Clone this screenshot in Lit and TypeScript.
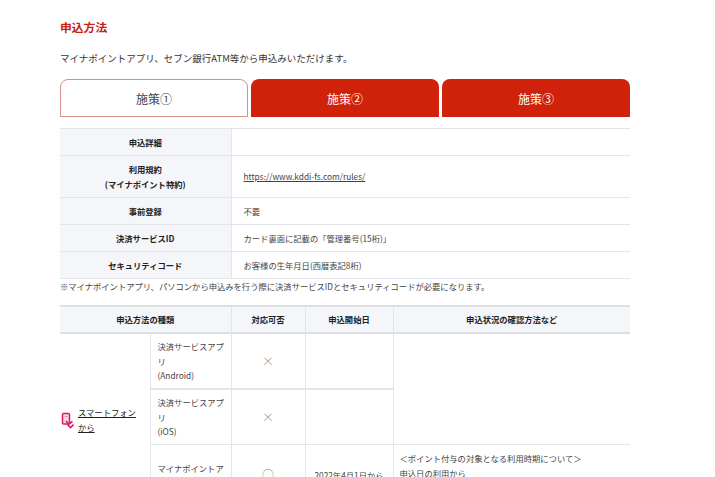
import { LitElement, html, css } from "lit";
import { customElement } from "lit/decorators.js";

@customElement("app-root")
export class AppRoot extends LitElement {
  static styles = css`
    :host {
      display: block;
      height: 477px;
      overflow: hidden;
      background: #fff;
      color: #333;
      font-family: "Noto Sans CJK JP", "Noto Sans", sans-serif;
      font-size: 8.3px;
    }
    .page { width: 570px; padding: 19px 0 0 60px; }
    h2 { margin: 0; font-size: 11.8px; line-height: 15px; font-weight: 700; color: #c9200f; }
    .lead { margin: 17px 0 0; font-size: 9.5px; line-height: 14px; }
    .tabs { display: flex; gap: 3px; margin-top: 14px; }
    .tab {
      flex: 1 1 188px; height: 38px; box-sizing: border-box;
      display: flex; align-items: center; justify-content: center;
      border-radius: 8px 8px 0 0;
      background: #d0210a; color: #fff; font-size: 12px;
    }
    .tab.on { background: #fff; color: #444; border: 1px solid #d9908a; }
    table { border-collapse: collapse; table-layout: fixed; width: 570px; }
    th, td { border: 1px solid #e3e5e8; padding: 0; line-height: 14.5px; }
    tr > :first-child { border-left: 0; }
    tr > :last-child { border-right: 0; }
    th { background: #f4f6f9; font-weight: 700; color: #222; text-align: center; }
    td { padding-left: 12px; color: #444; }
    .t1 { margin-top: 11px; }
    .t1 tr { height: 27px; }
    .t1 tr.tall { height: 42px; }
    .note { margin: 0; height: 26px; line-height: 15px; color: #444; }
    .t2 thead tr { height: 27px; }
    .t2 thead th { border-top: 2px solid #dcdfe4; border-bottom: 2px solid #dcdfe4; }
    .t2 tbody tr { height: 55px; }
    .t2 tbody tr.bold-top { height: 56px; }
    .t2 tbody tr.last { height: 62px; }
    .t2 td { padding: 5px 6px 5px 7px; vertical-align: middle; }
    .t2 td.mark { padding: 0; text-align: center; font-size: 12px; font-weight: 300; color: #888; }
    .t2 td.date { padding: 0; text-align: center; }
    .t2 tr.bold-top td.sub,
    .t2 tr.bold-top td.mark,
    .t2 tr.bold-top td.date { border-top: 2px solid #e3e5e8; }
    .t2 td.more { vertical-align: top; padding: 6px 6px; line-height: 15px; }
    .t2 td.phone-cell { padding: 0 0 0 1px; }
    .phone { display: flex; align-items: center; gap: 4px; color: #222; }
    .phone svg { flex: none; width: 13px; height: 17px; }
    a { color: inherit; text-decoration: underline; }
    .phone a { width: 62px; line-height: 15px; }
  `;

  render() {
    return html`
      <div class="page">
        <h2>申込方法</h2>
        <p class="lead">マイナポイントアプリ、セブン銀行ATM等から申込みいただけます。</p>
        <div class="tabs">
          <div class="tab on">施策①</div>
          <div class="tab">施策②</div>
          <div class="tab">施策③</div>
        </div>
        <table class="t1">
          <colgroup><col style="width:171px" /><col /></colgroup>
          <tr><th>申込詳細</th><td></td></tr>
          <tr class="tall">
            <th>利用規約<br />(マイナポイント特約)</th>
            <td><a href="#">https://www.kddi-fs.com/rules/</a></td>
          </tr>
          <tr><th>事前登録</th><td>不要</td></tr>
          <tr><th>決済サービスID</th><td>カード裏面に記載の「管理番号(15桁)」</td></tr>
          <tr><th>セキュリティコード</th><td>お客様の生年月日(西暦表記8桁)</td></tr>
        </table>
        <p class="note">※マイナポイントアプリ、パソコンから申込みを行う際に決済サービスIDとセキュリティコードが必要になります。</p>
        <table class="t2">
          <colgroup>
            <col style="width:90px" /><col style="width:81px" /><col style="width:74px" />
            <col style="width:88px" /><col />
          </colgroup>
          <thead>
            <tr>
              <th colspan="2">申込方法の種類</th>
              <th>対応可否</th>
              <th>申込開始日</th>
              <th>申込状況の確認方法など</th>
            </tr>
          </thead>
          <tbody>
            <tr>
              <td class="phone-cell" rowspan="3">
                <div class="phone">
                  <svg viewBox="0 0 13 17" fill="none">
                    <rect x="1.5" y="1.5" width="7" height="10.5" rx="1" fill="#f9d5e2" stroke="#dc1c62" stroke-width="1.5" />
                    <path d="M3.5 4.5h3" stroke="#e88aab" stroke-width="1" />
                    <path d="M5 9l3 3 3.5-2.5M6.5 12.5l3 3 3-3" stroke="#dc1c62" stroke-width="1.6" />
                  </svg>
                  <a href="#">スマートフォンから</a>
                </div>
              </td>
              <td class="sub">決済サービスアプリ<br />(Android)</td>
              <td class="mark">×</td>
              <td class="date"></td>
              <td rowspan="2"></td>
            </tr>
            <tr class="bold-top">
              <td class="sub">決済サービスアプリ<br />(iOS)</td>
              <td class="mark">×</td>
              <td class="date"></td>
            </tr>
            <tr class="last">
              <td class="sub">マイナポイントアプリ</td>
              <td class="mark">○</td>
              <td class="date">2022年4月1日から</td>
              <td class="more">＜ポイント付与の対象となる利用時期について＞<br />申込日の利用から</td>
            </tr>
          </tbody>
        </table>
      </div>
    `;
  }
}
